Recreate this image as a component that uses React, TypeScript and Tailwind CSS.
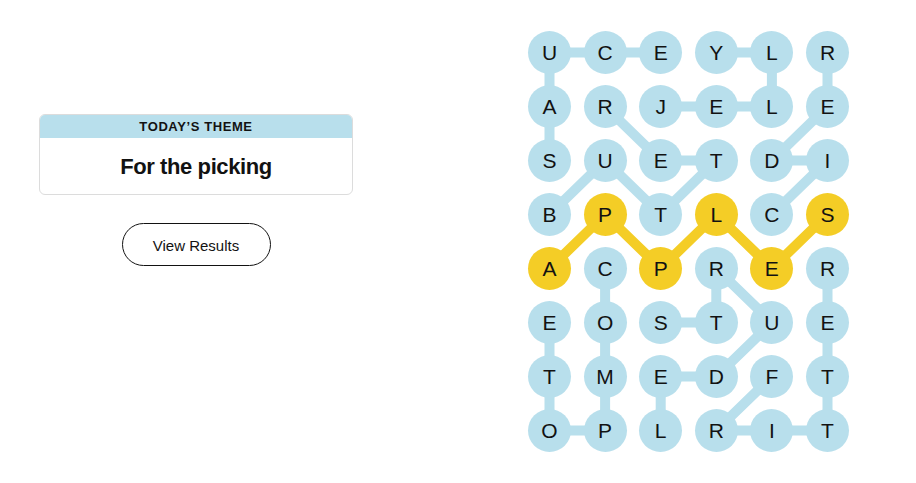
const ROWS = [
  "UCEYLR",
  "ARJELE",
  "SUETDI",
  "BPTLCS",
  "ACPRER",
  "EOSTUE",
  "TMEDFT",
  "OPLRIT",
];

// spangram cells
const GOLD = new Set(["4,0", "3,1", "4,2", "3,3", "4,4", "3,5"]);

type Cell = [number, number];

const WORDS: Cell[][] = [
  // SAUCE
  [[2, 0], [1, 0], [0, 0], [0, 1], [0, 2]],
  // JELLY
  [[1, 2], [1, 3], [1, 4], [0, 4], [0, 3]],
  // CIDER
  [[3, 4], [2, 5], [2, 4], [1, 5], [0, 5]],
  // BUTTER
  [[3, 0], [2, 1], [3, 2], [2, 3], [2, 2], [1, 1]],
  // COMPOTE
  [[4, 1], [5, 1], [6, 1], [7, 1], [7, 0], [6, 0], [5, 0]],
  // STRUDEL
  [[5, 2], [5, 3], [4, 3], [5, 4], [6, 3], [6, 2], [7, 2]],
  // FRITTER
  [[6, 4], [7, 3], [7, 4], [7, 5], [6, 5], [5, 5], [4, 5]],
];

const SPANGRAM: Cell[] = [[4, 0], [3, 1], [4, 2], [3, 3], [4, 4], [3, 5]];

const PX = 55.6;
const PY = 54;

const pt = ([r, c]: Cell) => `${21.5 + c * PX},${21.5 + r * PY}`;

const Board = () => (
  <div className="relative ml-[175px] mt-[31px] w-[321px] h-[421px]">
    <svg className="absolute inset-0" width={321} height={421}>
      {WORDS.map((w, i) => (
        <polyline
          key={i}
          points={w.map(pt).join(" ")}
          fill="none"
          stroke="#b8dfec"
          strokeWidth={10}
          strokeLinejoin="round"
        />
      ))}
      <polyline
        points={SPANGRAM.map(pt).join(" ")}
        fill="none"
        stroke="#f4cd26"
        strokeWidth={10}
        strokeLinejoin="round"
      />
    </svg>
    <div className="relative grid grid-cols-[repeat(6,43px)] gap-x-[12.6px] gap-y-[11px]">
      {ROWS.map((row, r) =>
        row.split("").map((ch, c) => (
          <div
            key={`${r}-${c}`}
            className={`flex items-center justify-center rounded-full w-[43px] h-[43px] text-[21px] text-[#121212] ${
              GOLD.has(`${r},${c}`) ? "bg-[#f4cd26]" : "bg-[#b8dfec]"
            }`}
          >
            {ch}
          </div>
        ))
      )}
    </div>
  </div>
);

export default function App() {
  return (
    <div className="flex w-[916px] h-[483px] bg-white font-['Liberation_Sans',Arial,sans-serif] text-[#121212]">
      <div className="ml-[39px] mt-[114px] w-[314px] flex flex-col items-center">
        <div className="w-full rounded-md border border-[#dcdcdc] overflow-hidden">
          <div className="bg-[#b8dfec] h-[23px] flex items-center justify-center text-[13px] font-semibold tracking-[0.6px] uppercase">
            Today’s Theme
          </div>
          <div className="h-[56px] flex items-center justify-center text-[22px] font-bold tracking-[-0.4px]">
            For the picking
          </div>
        </div>
        <button className="mt-[28px] w-[149px] h-[43px] pt-[3px] rounded-full border border-[#121212] text-[15px] bg-white">
          View Results
        </button>
      </div>
      <Board />
    </div>
  );
}
